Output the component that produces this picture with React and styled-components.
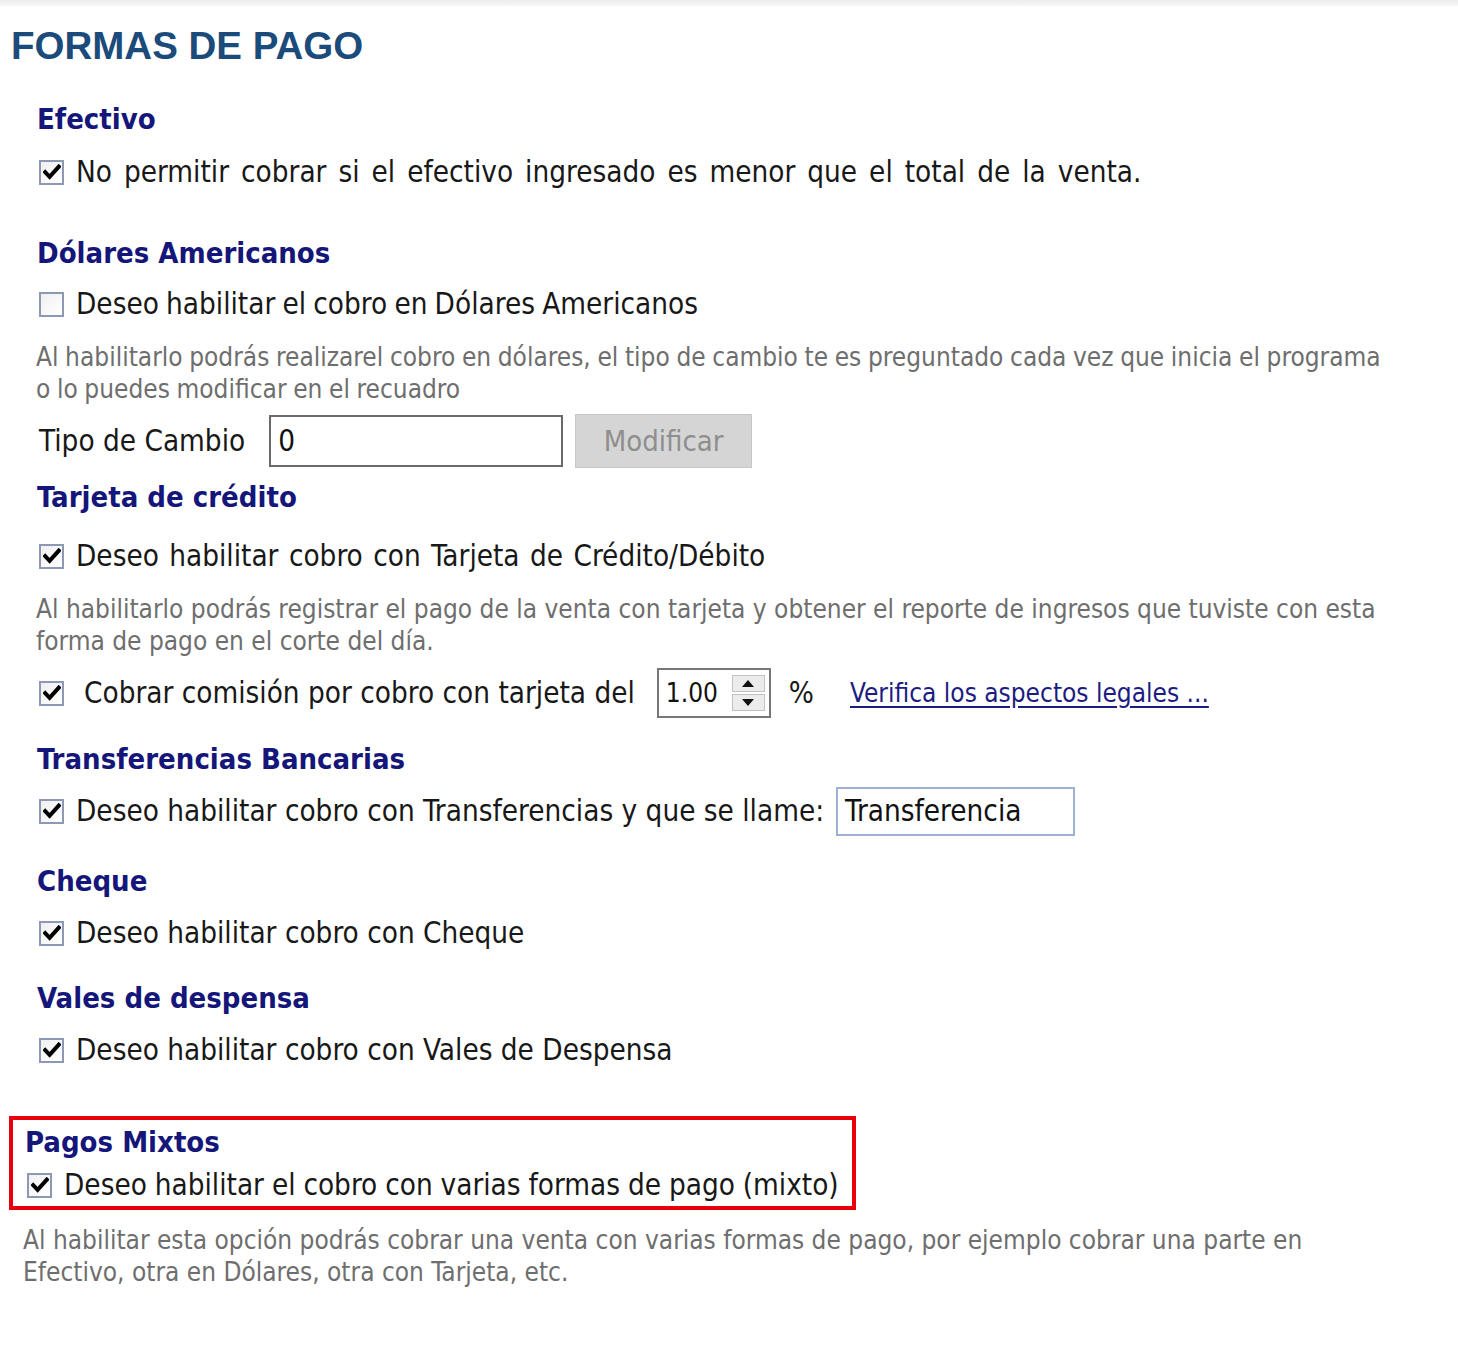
import React from "react";
import styled, { createGlobalStyle } from "styled-components";

const GlobalStyle = createGlobalStyle`
  html, body {
    margin: 0;
    padding: 0;
    background: #ffffff;
  }
  body {
    font-family: "DejaVu Sans Condensed", "DejaVu Sans", "Liberation Sans", sans-serif;
    color: #1a1a1a;
  }
`;

const CheckMark = () => (
  <svg width="18" height="16" viewBox="0 0 18 16">
    <path d="M2.2 8.2 L6.6 12.8 L15.8 2.6" fill="none" stroke="#000" strokeWidth="4" strokeLinecap="square" />
  </svg>
);

const CheckBox = ({ checked }) => <Box>{checked && <CheckMark />}</Box>;

const Spin = () => (
  <SpinWrap>
    <SpinBtn>
      <svg width="12" height="7" viewBox="0 0 12 7">
        <path d="M6 0 L12 7 L0 7 Z" fill="#111" />
      </svg>
    </SpinBtn>
    <SpinBtn>
      <svg width="12" height="7" viewBox="0 0 12 7">
        <path d="M0 0 L12 0 L6 7 Z" fill="#111" />
      </svg>
    </SpinBtn>
  </SpinWrap>
);

const App = () => {
  return (
    <Page>
      <GlobalStyle />
      <TopBand />
      <Title>FORMAS DE PAGO</Title>

      <Heading $top={28}>Efectivo</Heading>
      <Row $top={15} $h={36}>
        <CheckBox checked />
        <Label $ws={3.6}>No permitir cobrar si el efectivo ingresado es menor que el total de la venta.</Label>
      </Row>

      <Heading $top={43}>Dólares Americanos</Heading>
      <Row $top={13} $h={36}>
        <CheckBox />
        <Label $ws={-1.2}>Deseo habilitar el cobro en Dólares Americanos</Label>
      </Row>
      <Desc $top={19} $ws={-0.8}>
        Al habilitarlo podrás realizarel cobro en dólares, el tipo de cambio te es preguntado cada vez que inicia el programa
        <br />o lo puedes modificar en el recuadro
      </Desc>
      <Row $top={9} $h={54}>
        <Label $ml={2}>Tipo de Cambio</Label>
        <TextBox $w={294} $h={52} $border="#6a6a6a" $ml={24}>0</TextBox>
        <Button>Modificar</Button>
      </Row>

      <Heading $top={9}>Tarjeta de crédito</Heading>
      <Row $top={21} $h={36}>
        <CheckBox checked />
        <Label $ws={2}>Deseo habilitar cobro con Tarjeta de Crédito/Débito</Label>
      </Row>
      <Desc $top={19}>
        Al habilitarlo podrás registrar el pago de la venta con tarjeta y obtener el reporte de ingresos que tuviste con esta
        <br />forma de pago en el corte del día.
      </Desc>
      <Row $top={11} $h={50}>
        <CheckBox checked />
        <Label $ml={20}>Cobrar comisión por cobro con tarjeta del</Label>
        <TextBox $w={114} $h={50} $border="#777777" $ml={22} $size={26}>
          1.00
          <Spin />
        </TextBox>
        <Label $ml={18}>%</Label>
        <Link $ml={36}>Verifica los aspectos legales ...</Link>
      </Row>

      <Heading $top={21}>Transferencias Bancarias</Heading>
      <Row $top={7} $h={50}>
        <CheckBox checked />
        <Label>Deseo habilitar cobro con Transferencias y que se llame:</Label>
        <TextBox $w={239} $h={49} $border="#9fb1d2" $ml={12}>Transferencia</TextBox>
      </Row>

      <Heading $top={25}>Cheque</Heading>
      <Row $top={14} $h={36}>
        <CheckBox checked />
        <Label>Deseo habilitar cobro con Cheque</Label>
      </Row>

      <Heading $top={27}>Vales de despensa</Heading>
      <Row $top={14} $h={36}>
        <CheckBox checked />
        <Label>Deseo habilitar cobro con Vales de Despensa</Label>
      </Row>

      <Highlight>
        <Heading $top={2}>Pagos Mixtos</Heading>
        <Row $top={5} $h={36}>
          <CheckBox checked />
          <Label $ws={-0.5}>Deseo habilitar el cobro con varias formas de pago (mixto)</Label>
        </Row>
      </Highlight>
      <Desc $top={14} $left={23}>
        Al habilitar esta opción podrás cobrar una venta con varias formas de pago, por ejemplo cobrar una parte en
        <br />Efectivo, otra en Dólares, otra con Tarjeta, etc.
      </Desc>
    </Page>
  );
};
export default App;

const Page = styled.div`
  width: 1458px;
  min-height: 1350px;
  padding: 0 0 0 37px;
  box-sizing: border-box;
  display: flex;
  flex-direction: column;
  align-items: flex-start;
`;
const TopBand = styled.div`
  align-self: stretch;
  margin-left: -37px;
  height: 6px;
  background: linear-gradient(#ececec, #f7f7f7);
`;
const Title = styled.h1`
  margin: 15px 0 0 -26px;
  height: 50px;
  display: flex;
  align-items: center;
  font-family: "Liberation Sans", Arial, sans-serif;
  font-weight: 700;
  font-size: 38.5px;
  color: #1b4b7b;
`;
const Heading = styled.h2`
  margin: ${(p) => p.$top}px 0 0 0;
  height: 40px;
  display: flex;
  align-items: center;
  font-weight: 700;
  font-size: 29px;
  color: #15167a;
`;
const Row = styled.div`
  margin-top: ${(p) => p.$top}px;
  height: ${(p) => p.$h}px;
  display: flex;
  align-items: center;
`;
const Box = styled.span`
  width: 21px;
  height: 21px;
  border: 2px solid #8e98b4;
  background: linear-gradient(135deg, #f0f0f0, #ffffff);
  display: inline-flex;
  align-items: center;
  justify-content: center;
  flex-shrink: 0;
  margin-left: 2px;
`;
const Label = styled.span`
  margin-left: ${(p) => (p.$ml !== undefined ? p.$ml : 12)}px;
  font-size: 29.4px;
  word-spacing: ${(p) => p.$ws || 0}px;
  color: #181818;
  white-space: nowrap;
`;
const Desc = styled.p`
  margin: ${(p) => p.$top}px 0 0 ${(p) => (p.$left ? p.$left - 37 : -1)}px;
  font-size: 26px;
  line-height: 32px;
  word-spacing: ${(p) => p.$ws || 0}px;
  color: #6e6e6e;
  white-space: nowrap;
`;
const TextBox = styled.div`
  margin-left: ${(p) => p.$ml}px;
  width: ${(p) => p.$w}px;
  height: ${(p) => p.$h}px;
  box-sizing: border-box;
  border: 2px solid ${(p) => p.$border};
  background: #fff;
  display: flex;
  align-items: center;
  padding-left: 7px;
  font-size: ${(p) => p.$size || 29.4}px;
  color: #111;
  position: relative;
`;
const Button = styled.div`
  margin-left: 12px;
  width: 177px;
  height: 54px;
  box-sizing: border-box;
  border: 1px solid #c6c6c6;
  background: #d5d5d5;
  display: flex;
  align-items: center;
  justify-content: center;
  font-size: 29px;
  color: #8e8e8e;
`;
const SpinWrap = styled.div`
  position: absolute;
  right: 4px;
  top: 5px;
  display: flex;
  flex-direction: column;
  gap: 2px;
`;
const SpinBtn = styled.div`
  width: 33px;
  height: 17px;
  box-sizing: border-box;
  border: 1px solid #c2c2c2;
  background: #ececec;
  display: flex;
  align-items: center;
  justify-content: center;
`;
const Link = styled.span`
  margin-left: ${(p) => p.$ml}px;
  font-size: 26px;
  color: #1c1c82;
  text-decoration: underline;
  text-underline-offset: 4px;
  white-space: nowrap;
`;
const Highlight = styled.div`
  margin: 48px 0 0 -28px;
  width: 847px;
  height: 94px;
  box-sizing: border-box;
  border: 4px solid #e8000b;
  padding: 0 0 0 12px;
`;
